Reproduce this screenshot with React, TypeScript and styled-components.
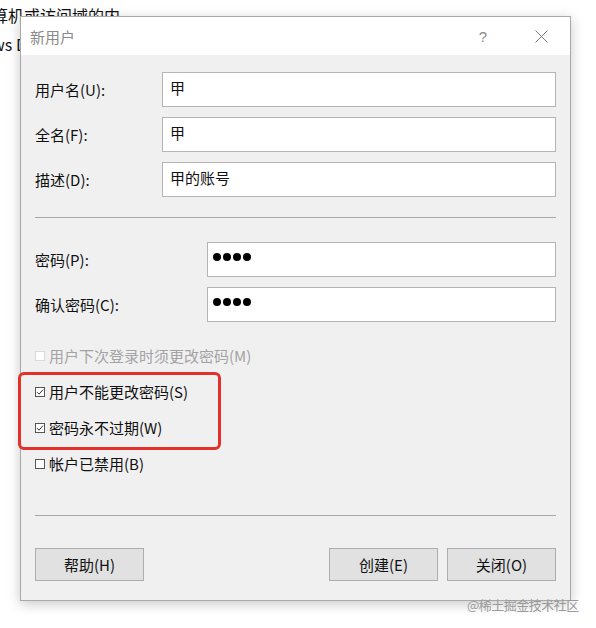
import React from "react";
import styled, { createGlobalStyle } from "styled-components";

const Global = createGlobalStyle`
  html, body { margin: 0; padding: 0; background: #ffffff; overflow: hidden; }
  body { font-family: "Noto Sans CJK SC", "Noto Sans", sans-serif; }
`;

const Desktop = styled.div`
  position: relative;
  width: 596px;
  height: 628px;
  overflow: hidden;
  background: #ffffff;
`;

const BehindWindow = styled.div`
  position: absolute;
  left: -8px;
  top: 4px;
  display: flex;
  flex-direction: column;
  gap: 7px;
  font-size: 16px;
  line-height: 22px;
  color: #111;
`;

const Dialog = styled.div`
  position: absolute;
  left: 20px;
  top: 16px;
  width: 551px;
  display: flex;
  flex-direction: column;
  border: 1px solid #a9a9a9;
  box-sizing: border-box;
  background: #f0f0f0;
  box-shadow: 0 3px 12px rgba(0, 0, 0, 0.22);
`;

const TitleBar = styled.div`
  height: 38px;
  background: #ffffff;
  display: flex;
  align-items: center;
  padding-left: 9px;
`;

const TitleText = styled.div`
  flex: 1;
  font-size: 15px;
  color: #8a8a8a;
`;

const TitleButton = styled.div`
  width: 58px;
  height: 38px;
  display: flex;
  align-items: center;
  justify-content: center;
  color: #8a8a8a;
  font-size: 15px;
  font-family: "Liberation Sans", sans-serif;
`;

const Body = styled.div`
  padding: 17px 14px 19px;
  display: flex;
  flex-direction: column;
`;

const FieldGrid = styled.div<{ $label: number }>`
  display: grid;
  grid-template-columns: ${(p) => p.$label}px 1fr;
  row-gap: 10px;
  align-items: center;
`;

const Label = styled.div`
  font-size: 15px;
  color: #111;
  line-height: 20px;
`;

const Input = styled.div`
  height: 35px;
  box-sizing: border-box;
  border: 1px solid #b4b4b4;
  background: #ffffff;
  padding: 5px 7px 0;
  font-size: 15px;
  line-height: 20px;
  color: #111;
`;

const Dots = styled.div`
  display: flex;
  gap: 2px;
  padding-top: 5px;
  margin-left: -2px;
`;

const Dot = styled.span`
  width: 8px;
  height: 8px;
  border-radius: 50%;
  background: #000;
`;

const Separator = styled.div<{ $top: number; $bottom: number }>`
  height: 1px;
  background: #a8a8a8;
  margin-top: ${(p) => p.$top}px;
  margin-bottom: ${(p) => p.$bottom}px;
`;

const CheckList = styled.div`
  margin-top: 16px;
  display: flex;
  flex-direction: column;
`;

const CheckRow = styled.div<{ $disabled?: boolean }>`
  height: 36px;
  display: flex;
  align-items: center;
  gap: 4px;
  font-size: 15px;
  line-height: 20px;
  color: ${(p) => (p.$disabled ? "#a3a3a3" : "#111")};
`;

const Box = styled.span<{ $disabled?: boolean }>`
  width: 10px;
  height: 10px;
  box-sizing: border-box;
  border: 1px solid ${(p) => (p.$disabled ? "#d8d8d8" : "#555")};
  background: #ffffff;
  display: flex;
  align-items: center;
  justify-content: center;
  flex-shrink: 0;
`;

const ButtonRow = styled.div`
  display: flex;
  gap: 9px;
`;

const Spacer = styled.div`
  flex: 1;
`;

const Button = styled.div`
  width: 109px;
  height: 33px;
  box-sizing: border-box;
  border: 1px solid #adadad;
  background: #e1e1e1;
  display: flex;
  align-items: center;
  justify-content: center;
  font-size: 15px;
  color: #111;
`;

const Highlight = styled.div`
  position: absolute;
  left: 18px;
  top: 372px;
  width: 203px;
  height: 78px;
  box-sizing: border-box;
  border: 3px solid #e3302a;
  border-radius: 6px;
`;

const Watermark = styled.div`
  position: absolute;
  left: 467px;
  top: 596px;
  font-size: 13px;
  line-height: 18px;
  color: #9a9a9a;
  letter-spacing: -0.5px;
`;

const Check = () => (
  <svg width="8" height="8" viewBox="0 0 8 8">
    <path d="M1 4.2 L3 6.2 L7 1.6" fill="none" stroke="#333" strokeWidth="1" />
  </svg>
);

const CloseIcon = () => (
  <svg width="13" height="13" viewBox="0 0 13 13">
    <path d="M0.5 0.5 L12.5 12.5 M12.5 0.5 L0.5 12.5" stroke="#7a7a7a" strokeWidth="1" />
  </svg>
);

const PasswordDots = () => (
  <Dots>
    <Dot />
    <Dot />
    <Dot />
    <Dot />
  </Dots>
);

export default function App() {
  return (
    <Desktop>
      <Global />
      <BehindWindow>
        <div>算机或访问域的内</div>
        <div>ws D</div>
      </BehindWindow>
      <Dialog>
        <TitleBar>
          <TitleText>新用户</TitleText>
          <TitleButton>?</TitleButton>
          <TitleButton>
            <CloseIcon />
          </TitleButton>
        </TitleBar>
        <Body>
          <FieldGrid $label={127}>
            <Label>用户名(U):</Label>
            <Input>甲</Input>
            <Label>全名(F):</Label>
            <Input>甲</Input>
            <Label>描述(D):</Label>
            <Input>甲的账号</Input>
          </FieldGrid>
          <Separator $top={20} $bottom={24} />
          <FieldGrid $label={172}>
            <Label>密码(P):</Label>
            <Input>
              <PasswordDots />
            </Input>
            <Label>确认密码(C):</Label>
            <Input>
              <PasswordDots />
            </Input>
          </FieldGrid>
          <CheckList>
            <CheckRow $disabled>
              <Box $disabled />
              用户下次登录时须更改密码(M)
            </CheckRow>
            <CheckRow>
              <Box>
                <Check />
              </Box>
              用户不能更改密码(S)
            </CheckRow>
            <CheckRow>
              <Box>
                <Check />
              </Box>
              密码永不过期(W)
            </CheckRow>
            <CheckRow>
              <Box />
              帐户已禁用(B)
            </CheckRow>
          </CheckList>
          <Separator $top={33} $bottom={32} />
          <ButtonRow>
            <Button>帮助(H)</Button>
            <Spacer />
            <Button>创建(E)</Button>
            <Button>关闭(O)</Button>
          </ButtonRow>
        </Body>
      </Dialog>
      <Highlight />
      <Watermark>@稀土掘金技术社区</Watermark>
    </Desktop>
  );
}
